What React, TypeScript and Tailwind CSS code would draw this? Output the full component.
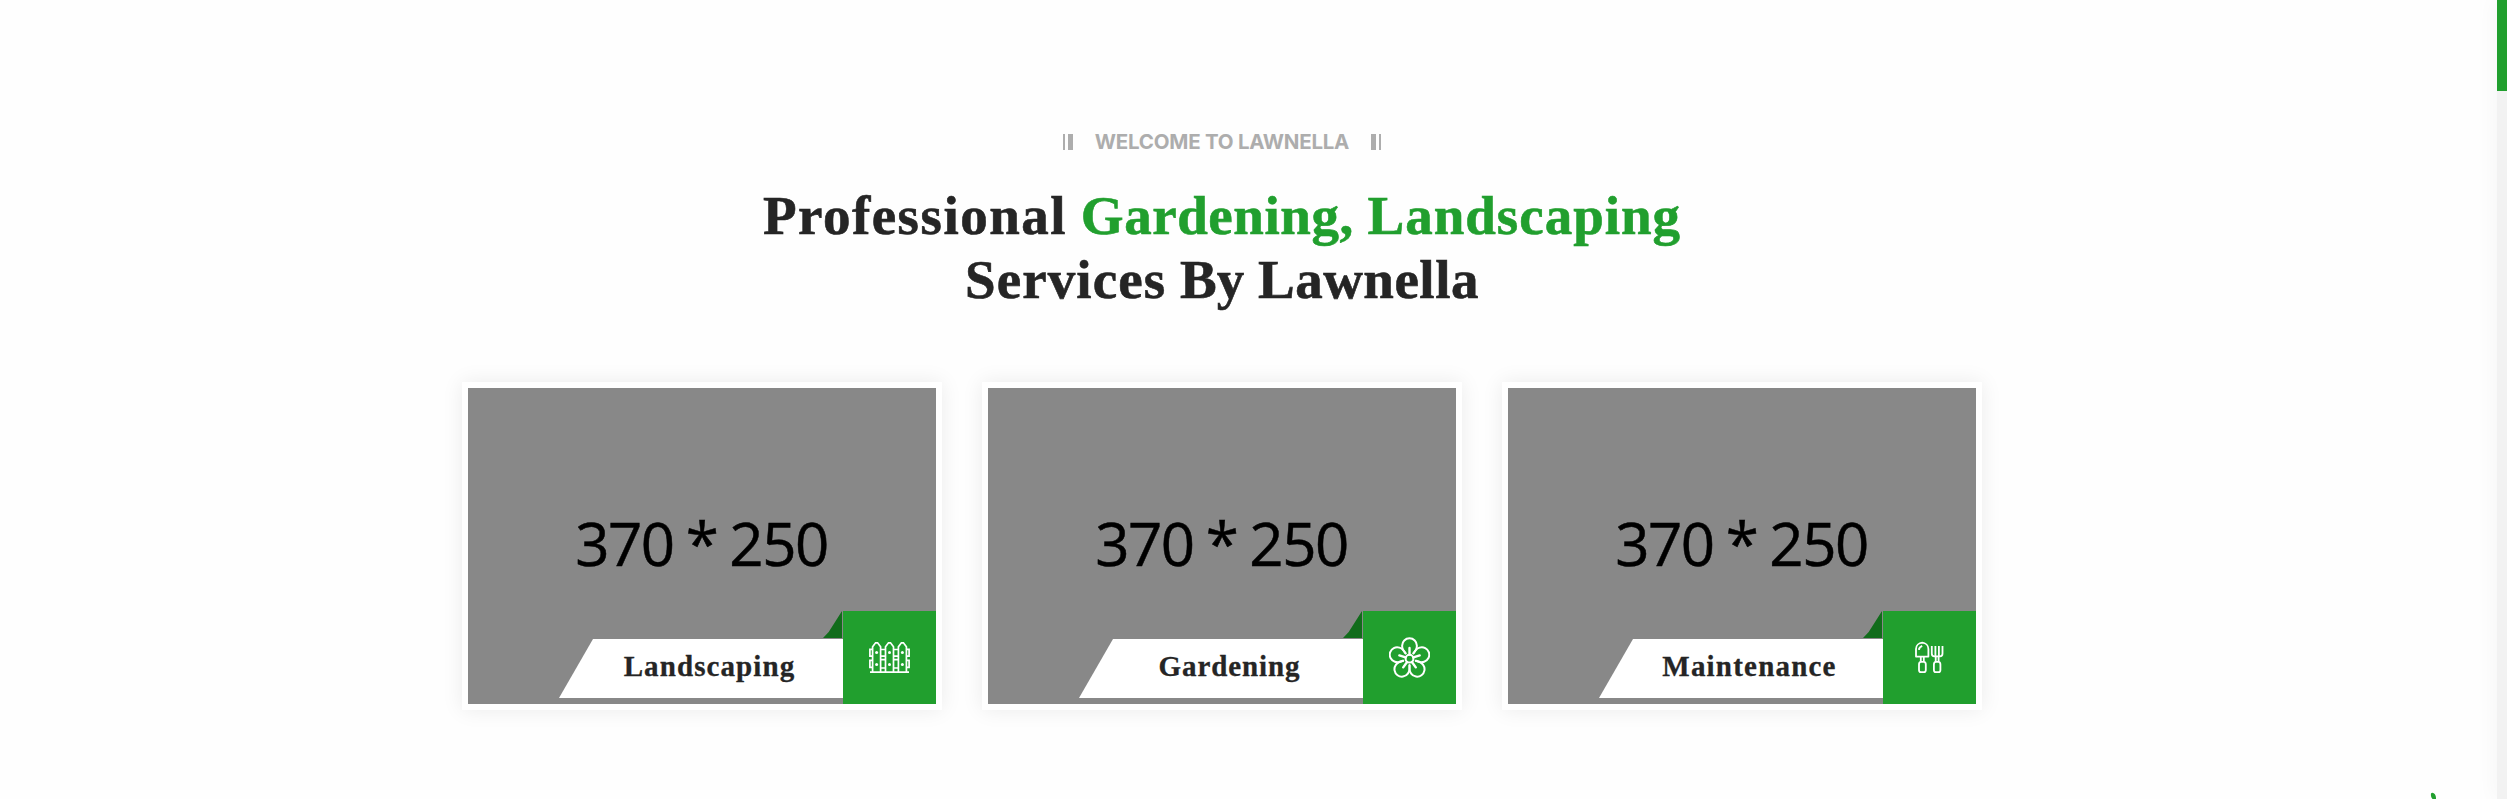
import React from "react";

function FenceIcon() {
  const pickets = [3.6, 16.5, 29.4];
  return (
    <svg className="h-[41px] w-[41px]" viewBox="0 0 41 41" fill="none" stroke="#fff" strokeWidth="1.7">
      {pickets.map((x) => (
        <g key={x}>
          <path d={`M${x} 35V9.800l3-4h2l3 4V35`} />
          <circle cx={x + 4} cy="15.5" r="1.5" fill="#fff" stroke="none" />
          <circle cx={x + 4} cy="27.5" r="1.5" fill="#fff" stroke="none" />
        </g>
      ))}
      <path d="M11.6 12.5h4.9M11.6 19.2h4.9M11.6 22.7h4.9M11.6 31h4.9M24.5 12.5h4.9M24.5 19.2h4.9M24.5 22.7h4.9M24.5 31h4.9" />
      <path d="M3.6 12.3H.9v6.9h2.7M3.6 23.3H.9v7h2.7M37.4 12.3h2.7v6.9h-2.7M37.4 23.3h2.7v7h-2.7M1 35.2h39" />
    </svg>
  );
}

function FlowerIcon() {
  const turns = [0, 72, 144, 216, 288];
  return (
    <svg className="h-[41px] w-[41px]" viewBox="0 0 41 41" fill="none" stroke="#fff" strokeWidth="2" strokeLinecap="round">
      {turns.map((a) => (
        <g key={a} transform={`rotate(${a} 20.5 21.7)`}>
          <path d="M16.600 16.300L14.200 13C13.400 11.600 13.100 10.100 13.100 8.700a7.400 7.400 0 0 1 14.800 0c0 1.400-.3 2.900-1.100 4.300L24.400 16.300" />
          <path d="M20.5 17.6V11" strokeWidth="2.4" />
        </g>
      ))}
      <circle cx="20.5" cy="21.7" r="3.9" />
    </svg>
  );
}

function ToolsIcon() {
  return (
    <svg className="h-[41px] w-[41px]" viewBox="0 0 41 41" fill="none" stroke="#fff" strokeWidth="1.8" strokeLinejoin="round">
      <path d="M7 19.6V12c0-3.600 3-6 6.200-6.300 3.200.3 6.200 2.700 6.200 6.300v7.600z" />
      <path d="M9.900 12.800c.2-2.200 1.500-3.200 3.300-4" strokeWidth="1.9" />
      <path d="M11.800 19.600v5M14.800 19.600v5" />
      <path d="M10 33v-5.500c0-1.800 1-2.700 1.900-2.700h3c1 0 1.900.9 1.900 2.700V33c0 1.500-1 2.200-1.900 2.200h-3c-.9 0-1.900-.7-1.900-2.200z" />
      <path d="M22.800 9v7.500c0 1.900 1 2.900 2.500 2.900h5.700c1.500 0 2.500-1 2.500-2.900V9M26.400 9v10M29.900 9v10M26.700 19.400v5.400M29.600 19.400v5.400" />
      <path d="M24.900 33v-5.500c0-1.800 1-2.700 1.900-2.700h2.700c1 0 1.900.9 1.900 2.700V33c0 1.500-1 2.200-1.900 2.200h-2.700c-.9 0-1.900-.7-1.900-2.200z" />
    </svg>
  );
}

const services = [
  { title: "Landscaping", Icon: FenceIcon, tracking: "tracking-[1.1px]" },
  { title: "Gardening", Icon: FlowerIcon, tracking: "tracking-[0.9px]" },
  { title: "Maintenance", Icon: ToolsIcon, tracking: "tracking-[1.2px]" },
];

export default function App() {
  return (
    <div className="flex h-[799px] w-full overflow-hidden bg-[#fefefe] font-['Liberation_Serif',serif] text-[#252525]">
      <main className="relative flex-1">
        <section className="flex w-[2444px] flex-col items-center pt-[127px]">
          <div className="flex h-[30px] items-center text-[#adadad]">
            <span className="flex h-4 gap-[3px]">
              <i className="w-0.5 bg-[#adadad]" />
              <i className="w-[5px] bg-[#adadad]" />
            </span>
            <p className="w-[298px] text-center font-['Inter',sans-serif] text-[20.5px] leading-[30px] font-bold tracking-[-0.25px] whitespace-nowrap">
              WELCOME TO LAWNELLA
            </p>
            <span className="flex h-4 gap-[3px]">
              <i className="w-[5px] bg-[#adadad]" />
              <i className="w-0.5 bg-[#adadad]" />
            </span>
          </div>
          <h2 className="mt-[27px] text-center text-[55px] leading-[64px] font-bold whitespace-nowrap [-webkit-text-stroke:0.6px_currentColor]">
            <span className="tracking-[1.5px]">Professional</span>{" "}
            <span className="text-[#219f2e]">
              <span className="tracking-[0.55px]">Gardening,</span> <span className="tracking-[1px]">Landscaping</span>
            </span>
            <br />
            <span className="tracking-[1.1px]">Services</span> By <span className="tracking-[0.5px]">Lawnella</span>
          </h2>
          <div className="mt-[70px] flex gap-10">
            {services.map(({ title, Icon, tracking }) => (
              <article key={title} className="h-[328px] w-[480px] bg-white p-1.5 shadow-[0_0_20px_rgba(0,0,0,0.08)]">
                <div className="relative h-full bg-[#888888]">
                  <p className="flex justify-center pt-[114px] pr-px font-['Open_Sans',sans-serif] text-[60px] leading-[82px] whitespace-nowrap text-black [-webkit-text-stroke:0.5px_currentColor]">
                    <span className="tracking-[-1.5px] [word-spacing:-2px]">370 * 250</span>
                  </p>
                  <div className="absolute right-0 bottom-0 flex items-end">
                    <h3 className={`mb-1.5 h-[59px] w-[284px] bg-white pl-[17px] text-center text-[29px] leading-[55px] font-bold [-webkit-text-stroke:0.3px_currentColor] [clip-path:polygon(34px_0,100%_0,100%_100%,0_100%)] ${tracking}`}>
                      {title}
                    </h3>
                    <div className="relative flex size-[93px] items-center justify-center bg-[#219f2e]">
                      <span className="absolute top-0 -left-5 h-[27px] w-[19px] bg-[#116c1b] [clip-path:polygon(100%_0,100%_100%,0_100%,30%_78%)]" />
                      <Icon />
                    </div>
                  </div>
                </div>
              </article>
            ))}
          </div>
        </section>
        <svg className="absolute top-[792px] left-[2430px] h-[7px] w-2" viewBox="0 0 8 7">
          <path d="M1 1.500C2 0 4.500 1 5.500 3.500 6 5 6 6 6 7H2.500C1 5.500.6 3 1 1.500z" fill="#219f2e" />
        </svg>
      </main>
      <aside className="w-2.5 bg-[#f2f2f2] shadow-[0_0_20px_rgba(0,0,0,0.06)]">
        <div className="h-[91px] bg-[#219f2e]" />
      </aside>
    </div>
  );
}
